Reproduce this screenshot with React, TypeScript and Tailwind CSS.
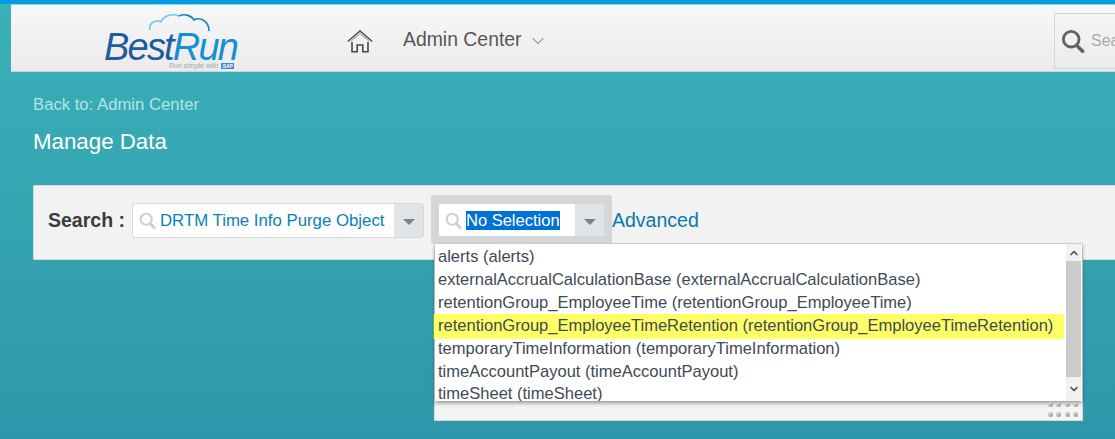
import { ChevronDown, ChevronUp } from "lucide-react";

const options = [
  "alerts (alerts)",
  "externalAccrualCalculationBase (externalAccrualCalculationBase)",
  "retentionGroup_EmployeeTime (retentionGroup_EmployeeTime)",
  "retentionGroup_EmployeeTimeRetention (retentionGroup_EmployeeTimeRetention)",
  "temporaryTimeInformation (temporaryTimeInformation)",
  "timeAccountPayout (timeAccountPayout)",
  "timeSheet (timeSheet)",
];

function SearchGlyph({ className }: { className: string }) {
  return (
    <svg viewBox="0 0 20 20" fill="none" stroke="currentColor" className={className}>
      <circle cx="8.5" cy="8.5" r="6.5" strokeWidth="2.4" />
      <path d="M13 13.5l5 5" strokeWidth="3" strokeLinecap="round" />
    </svg>
  );
}

function HomeGlyph() {
  return (
    <svg viewBox="0 0 26 23" fill="none" stroke="#4a4a4a" className="ml-[107px] w-[26px] h-[23px] shrink-0">
      <path d="M0.7 11.5L13 1L25.3 11.5" strokeWidth="1.4" />
      <path d="M3.5 11.5L13 3.6L22.5 11.5" strokeWidth="0.9" stroke="#8a8a8a" />
      <path d="M5 12V21.8H10.2V15H15.8V21.8H21V12" strokeWidth="1.6" />
    </svg>
  );
}

function Logo() {
  return (
    <div className="relative w-[136px] h-[60px] shrink-0">
      <svg viewBox="0 0 70 24" fill="none" className="absolute left-[44px] top-[5px] w-[70px] h-[24px]">
        <path d="M2 17C0 10 8 6 13 9C15 3 24 0 31 3" stroke="#7cc4ea" strokeWidth="1.6" />
        <path d="M31 3C37 0 44 3 46 7C51 4 61 7 61 18" stroke="#1f7cbc" strokeWidth="1.6" />
      </svg>
      <div className="absolute left-0 top-[24px] text-[38px] leading-[30px] italic tracking-[-1.8px] whitespace-nowrap">
        <span className="text-[#1f5b9e]">Best</span>
        <span className="text-[#1590d2]">Run</span>
      </div>
      <div className="absolute left-[65px] top-[54px] flex items-center gap-[3px] text-[7px] leading-[8px] text-[#a3a7ad] whitespace-nowrap">
        Run simple with
        <span className="bg-[#3f8fd0] text-white text-[5px] leading-[6px] px-[1px] font-bold italic">SAP</span>
      </div>
    </div>
  );
}

function Combo({ value, wide }: { value: string; wide?: boolean }) {
  return (
    <div
      className={`flex rounded-[3px] border border-[#d3d8dc] bg-white overflow-hidden ${
        wide ? "w-[292px] h-[35px]" : "w-[167px] h-[34px]"
      }`}
    >
      <div className="flex items-center flex-1 min-w-0 pl-[6px]">
        <SearchGlyph className="w-[17px] h-[17px] text-[#cfcfcf] shrink-0" />
        {wide ? (
          <span className="ml-[4px] text-[16.8px] text-[#0a7fb5] whitespace-nowrap">{value}</span>
        ) : (
          <span className="ml-[4px] text-[16.5px] leading-[19px] bg-[#0072d6] text-white whitespace-nowrap">{value}</span>
        )}
      </div>
      <div className="w-[29px] bg-[#e1e4e7] flex items-center justify-center shrink-0">
        <div className="w-0 h-0 mt-[3px] border-x-[6px] border-x-transparent border-t-[6px] border-t-[#7d8287]" />
      </div>
    </div>
  );
}

export default function App() {
  return (
    <div className="relative w-[1115px] h-[439px] overflow-hidden bg-gradient-to-b from-[#3ab1b8] to-[#2f97ab] font-['Liberation_Sans',Arial,sans-serif]">
      <div className="h-[4px] bg-[#009de0]" />
      <div className="h-[1px] ml-[11px] bg-[#8fd3ee]" />

      {/* top nav */}
      <div className="ml-[11px] h-[67px] pt-[6px] flex items-center bg-gradient-to-b from-[#f7f7f7] to-[#ebebeb] border-b border-[#c9d5d8] overflow-hidden">
        <div className="ml-[93px] mt-[-6px]">
          <Logo />
        </div>
        <HomeGlyph />
        <span className="ml-[30px] mt-[-2px] text-[19.4px] text-[#5b5550] whitespace-nowrap">Admin Center</span>
        <ChevronDown className="ml-[6px] w-[20px] h-[20px] text-[#6b6560]" strokeWidth={1.2} />
        <div className="ml-auto mr-[-10px] w-[71px] h-[56px] border border-[#cfd8dc] flex items-center pl-[6px] overflow-hidden">
          <SearchGlyph className="w-[24px] h-[24px] text-[#5f6468] shrink-0" />
          <span className="ml-[6px] text-[16px] text-[#a8a8a8] whitespace-nowrap">Search</span>
        </div>
      </div>

      <div className="pl-[33px]">
        <div className="mt-[23px] text-[16.7px] leading-[20px] text-[#b5e3e6]">Back to: Admin Center</div>
        <h1 className="mt-[14px] text-[22.3px] leading-[26px] text-white">Manage Data</h1>

        {/* search panel */}
        <div className="mt-[30px] h-[75px] flex items-center pl-[14px] pb-[4px] bg-[#f2f2f2] border border-r-0 border-[#d6dcdd] rounded-l-[2px]">
          <span className="w-[84px] shrink-0 text-[19.5px] font-bold text-[#3b3b3b] whitespace-nowrap">Search :</span>
          <Combo value="DRTM Time Info Purge Object" wide />
          <div className="ml-[7px] mt-[-2px] px-[7px] pt-[8px] pb-[7px] bg-[#d6d6d6] rounded-[3px]">
            <Combo value="No Selection" />
          </div>
          <span className="text-[19.5px] text-[#0a78ac] whitespace-nowrap">Advanced</span>
        </div>
      </div>

      {/* open dropdown */}
      <div className="absolute left-[434px] top-[243px] w-[649px] h-[178px] bg-[#f4f4f4] border border-[#d8d8d8]">
        <div className="flex h-[157px] bg-white shadow-[0_2px_4px_rgba(0,0,0,0.4)]">
          <ul className="flex-1 min-w-0 overflow-y-clip pt-[2px] text-[16.55px] leading-[22.9px] text-[#3f4a55]">
            {options.map((option, i) => (
              <li
                key={option}
                className={`whitespace-nowrap mr-[2px] ${
                  i === 3
                    ? "-ml-[1px] pl-[4px] -my-px py-px bg-[#ffff66] shadow-[-1px_0_0_#5cae5c]"
                    : "pl-[3px]"
                }`}
              >
                {option}
              </li>
            ))}
          </ul>
          <div className="w-[15px] flex flex-col bg-[#f1f1f1] mr-[1px]">
            <div className="h-[17px] flex items-center justify-center">
              <ChevronUp className="w-[12px] h-[12px] text-[#505050]" strokeWidth={3.5} />
            </div>
            <div className="h-[116px] bg-[#cbcbcb]" />
            <div className="flex-1 flex items-center justify-center">
              <ChevronDown className="w-[12px] h-[12px] text-[#505050]" strokeWidth={3.5} />
            </div>
          </div>
        </div>
        <div className="absolute right-[4px] bottom-[3px] grid grid-cols-4 gap-x-[3.5px] gap-y-[5px]">
          {Array.from({ length: 8 }).map((_, i) => (
            <span key={i} className="w-[5px] h-[5px] rounded-full bg-gradient-to-br from-[#e8e8e8] to-[#8c8c8c]" />
          ))}
        </div>
      </div>
    </div>
  );
}
